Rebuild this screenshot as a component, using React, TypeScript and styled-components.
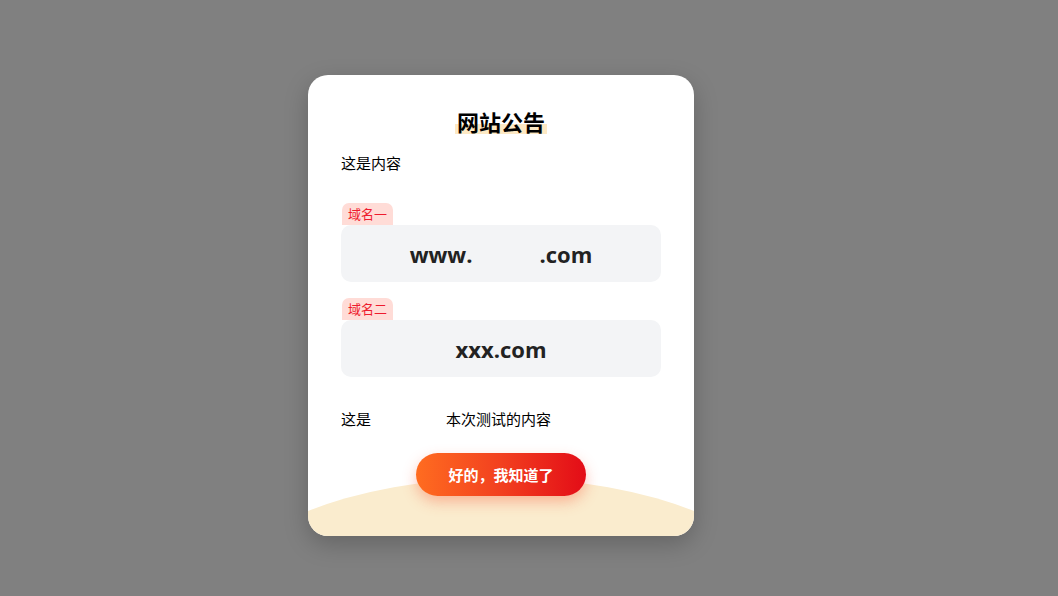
import React from "react";
import styled, { createGlobalStyle } from "styled-components";

const Global = createGlobalStyle`
  html, body { margin: 0; padding: 0; }
  body {
    background: #808080;
    font-family: "Open Sans", "Noto Sans CJK SC", sans-serif;
  }
`;

const Overlay = styled.div`
  width: 1058px;
  height: 596px;
  background: #808080;
  box-sizing: border-box;
  padding: 75px 0 0 308px;
  display: flex;
  align-items: flex-start;
`;

const Card = styled.div`
  position: relative;
  width: 386px;
  height: 461px;
  box-sizing: border-box;
  padding: 31px 33px 40px;
  background: #fff;
  border-radius: 20px;
  overflow: hidden;
  box-shadow: 0 8px 24px rgba(0, 0, 0, 0.22);
  display: flex;
  flex-direction: column;
  font-family: "Noto Sans CJK SC", sans-serif;
  color: #000;
`;

const Wave = styled.div`
  position: absolute;
  left: 50%;
  top: 403px;
  width: 560px;
  height: 240px;
  margin-left: -280px;
  border-radius: 50%;
  background: #faecce;
  z-index: 0;
`;

const Title = styled.h1`
  margin: 0;
  text-align: center;
  font-size: 22px;
  line-height: 30px;
  font-weight: 700;
  position: relative;
  z-index: 1;
`;

const Mark = styled.span`
  padding: 0 2px;
  background: linear-gradient(transparent 58%, #fde9c4 58%, #fde9c4 92%, transparent 92%);
`;

const Para = styled.p<{ $top: number }>`
  margin: ${(p) => p.$top}px 0 0;
  font-size: 15px;
  line-height: 22px;
  position: relative;
  z-index: 1;
`;

const Gap = styled.span`
  display: inline-block;
  width: 75px;
`;

const Domain = styled.div<{ $top: number }>`
  margin-top: ${(p) => p.$top}px;
  display: flex;
  flex-direction: column;
  align-items: flex-start;
  position: relative;
  z-index: 1;
`;

const Tag = styled.span`
  margin-left: 1px;
  height: 22px;
  padding: 0 6px;
  font-size: 13px;
  line-height: 22px;
  color: #ee1b2e;
  background: #ffdcd7;
  border-radius: 7px 7px 0 0;
`;

const Box = styled.div`
  align-self: stretch;
  height: 57px;
  background: #f3f4f6;
  border-radius: 10px;
  display: flex;
  align-items: center;
  justify-content: center;
  font-family: "Open Sans", sans-serif;
  font-weight: 700;
  font-size: 22px;
  color: #222;
  white-space: pre;
`;

const Blank = styled.span`
  display: inline-block;
  width: 67px;
`;

const Button = styled.button`
  position: relative;
  z-index: 1;
  align-self: center;
  margin-top: 23px;
  width: 170px;
  height: 43px;
  border: none;
  border-radius: 22px;
  background: linear-gradient(90deg, #ff6c20 0%, #f2401f 50%, #e30c17 100%);
  color: #fff;
  font-family: "Noto Sans CJK SC", sans-serif;
  font-size: 15px;
  font-weight: 700;
  box-shadow: 0 6px 14px rgba(250, 80, 50, 0.35);
  cursor: pointer;
`;

export default function App() {
  return (
    <>
      <Global />
      <Overlay>
        <Card>
          <Wave />
          <Title>
            <Mark>网站公告</Mark>
          </Title>
          <Para $top={16}>这是内容</Para>
          <Domain $top={29}>
            <Tag>域名一</Tag>
            <Box>
              www.<Blank />.com
            </Box>
          </Domain>
          <Domain $top={16}>
            <Tag>域名二</Tag>
            <Box>xxx.com</Box>
          </Domain>
          <Para $top={31}>
            这是<Gap />本次测试的内容
          </Para>
          <Button>好的，我知道了</Button>
        </Card>
      </Overlay>
    </>
  );
}
